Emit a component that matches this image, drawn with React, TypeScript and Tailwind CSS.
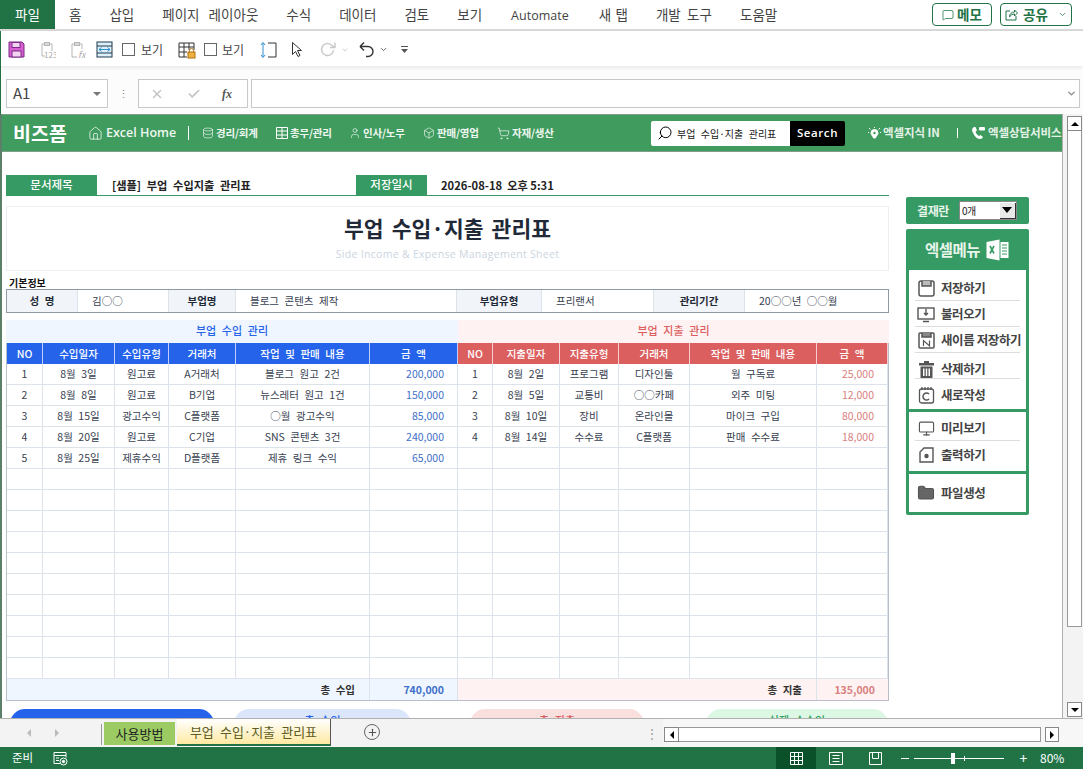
import { ChevronDown, House, Database, User, Box, ShoppingCart, Search, MessageSquare, X, Check, Plus, Monitor, Folder } from 'lucide-react';

const FONT = '[font-family:"Noto_Sans_CJK_KR","Noto_Sans",sans-serif]';

const TABS = [
  { label: '홈', cls: '' },
  { label: '삽입', cls: '' },
  { label: '페이지 레이아웃', cls: '[word-spacing:0.45em]' },
  { label: '수식', cls: '' },
  { label: '데이터', cls: '' },
  { label: '검토', cls: '' },
  { label: '보기', cls: '' },
  { label: 'Automate', cls: "[font-family:'Open_Sans',sans-serif] text-[12.500px] pt-[4px] pl-[15px] pr-[16px]" },
  { label: '새 탭', cls: '[word-spacing:0.1em]' },
  { label: '개발 도구', cls: '[word-spacing:0.25em]' },
  { label: '도움말', cls: '' },
];
const COLS = 'grid grid-cols-[36px_72px_54px_67px_134px_88px_35px_67px_59px_71px_127px_71px]';

const INCOME = [
  ['1', '8월 3일', '원고료', 'A거래처', '블로그 원고 2건', '200,000'],
  ['2', '8월 8일', '원고료', 'B기업', '뉴스레터 원고 1건', '150,000'],
  ['3', '8월 15일', '광고수익', 'C플랫폼', '○월 광고수익', '85,000'],
  ['4', '8월 20일', '원고료', 'C기업', 'SNS 콘텐츠 3건', '240,000'],
  ['5', '8월 25일', '제휴수익', 'D플랫폼', '제휴 링크 수익', '65,000'],
];
const EXPENSE = [
  ['1', '8월 2일', '프로그램', '디자인툴', '월 구독료', '25,000'],
  ['2', '8월 5일', '교통비', '○○카페', '외주 미팅', '12,000'],
  ['3', '8월 10일', '장비', '온라인몰', '마이크 구입', '80,000'],
  ['4', '8월 14일', '수수료', 'C플랫폼', '판매 수수료', '18,000'],
];

function Cell({ text = '' }: { text?: string }) {
  return (
    <div className="h-[21px] flex items-center justify-center border-r border-b border-[#dde3ea] text-[#374151]">
      {text}
    </div>
  );
}

function Amount({ text = '', color }: { text?: string; color: string }) {
  return (
    <div className={`h-[21px] flex items-center justify-end pr-[13px] border-r border-b border-[#dde3ea] ${color}`}>
      {text}
    </div>
  );
}

function Rows() {
  const rows = Array.from({ length: 15 }, (_, i) => i);
  return (
    <>
      {rows.map((i) => {
        const a = INCOME[i] || ['', '', '', '', '', ''];
        const b = EXPENSE[i] || ['', '', '', '', '', ''];
        return (
          <div key={i} className={COLS}>
            {a.slice(0, 5).map((t, j) => <Cell key={j} text={t} />)}
            <Amount text={a[5]} color="text-[#3f6fc9]" />
            {b.slice(0, 5).map((t, j) => <Cell key={j} text={t} />)}
            <Amount text={b[5]} color="text-[#d98080]" />
          </div>
        );
      })}
    </>
  );
}

function HeaderCell({ text, color }: { text: string; color: string }) {
  return <div className={`h-[21px] flex items-center justify-center border-r border-white/70 text-white font-medium ${color}`}>{text}</div>;
}

function InfoLabel({ text, w }: { text: string; w: string }) {
  return <div className={`${w} bg-[#f1f5f9] flex items-center justify-center font-bold text-[#1f2937] border-r border-[#dde3ea]`}>{text}</div>;
}

function InfoValue({ text, w }: { text: string; w: string }) {
  return <div className={`${w} pl-[14px] flex items-center text-[#374151] border-r border-[#dde3ea] last:border-r-0`}>{text}</div>;
}

function NavItem({ icon, text, w }: { icon: React.ReactNode; text: string; w: string }) {
  return (
    <div className={`${w} flex items-center gap-[2px] text-[10.5px] font-bold tracking-[-0.2px] text-[#eef7f0] shrink-0`}>
      {icon}
      <span>{text}</span>
    </div>
  );
}

function MenuRow({ icon, text, line = true, pt = 'pt-[2px]' }: { icon: React.ReactNode; text: string; line?: boolean; pt?: string }) {
  return (
    <div className={`h-[26px] mx-[6px] flex items-center gap-[6px] pl-[2px] ${pt} ${line ? 'border-b border-[#ddd]' : ''} text-[12.5px] font-semibold text-[#444] tracking-[-0.4px] [word-spacing:0] whitespace-nowrap`}>
      <span className="w-[18px] flex justify-center shrink-0">{icon}</span>
      <span>{text}</span>
    </div>
  );
}

function Toolbar() {
  return (
    <div className="h-[35px] flex items-center pl-[7px] pt-[2px] border-l border-[#217346] bg-white text-[12px] text-[#444] shadow-[0_2px_4px_rgba(0,0,0,0.08)] relative">
      <svg width="17" height="17" viewBox="0 0 17 17">
        <path d="M1 1h13l2 2v13H1z" fill="#d65fd0" stroke="#7a2a88" />
        <rect x="4" y="1.500" width="8" height="5" fill="#f3d3f0" stroke="#7a2a88" />
        <rect x="4" y="10" width="9" height="6" fill="#f3d3f0" stroke="#7a2a88" />
      </svg>
      <svg className="ml-[14px]" width="17" height="18" viewBox="0 0 17 18" fill="none" stroke="#b5b5b5">
        <path d="M3 3h10v7M3 3v12h3" />
        <rect x="5.500" y="1.500" width="5" height="3" />
        <text x="5" y="17" fontSize="8" fill="#aaa" stroke="none">123</text>
      </svg>
      <svg className="ml-[13px]" width="17" height="18" viewBox="0 0 17 18" fill="none" stroke="#b5b5b5">
        <path d="M3 3h10v5M3 3v13h5" />
        <rect x="5.500" y="1.500" width="5" height="3" />
        <text x="9" y="17" fontSize="9" fontStyle="italic" fill="#aaa" stroke="none">fx</text>
      </svg>
      <svg className="ml-[10px]" width="17" height="17" viewBox="0 0 17 17" fill="none" stroke="#1e3a4c">
        <rect x="1" y="1" width="15" height="15" fill="#dff0fa" />
        <path d="M1 5h15M1 12h15" />
        <path d="M3 8.500h11M3 8.500l2.500-2M3 8.500l2.500 2M14 8.500l-2.500-2M14 8.500l-2.500 2" stroke="#2f8fd0" />
      </svg>
      <span className="ml-[9px] w-[13px] h-[13px] border border-[#666] bg-white" />
      <span className="ml-[6px] w-[24px]">보기</span>
      <svg className="ml-[13px]" width="18" height="18" viewBox="0 0 18 18" fill="none" stroke="#333">
        <path d="M1 2h15v7M1 2v14h8M1 6h15M1 11h8M6 2v14M11 2v7" />
        <rect x="10" y="11" width="7" height="6" fill="#f0b040" stroke="#b07010" />
        <path d="M11.500 11V9.500a2 2 0 0 1 4 0V11" stroke="#b07010" />
      </svg>
      <span className="ml-[8px] w-[13px] h-[13px] border border-[#666] bg-white" />
      <span className="ml-[5px] w-[24px]">보기</span>
      <svg className="ml-[14px]" width="17" height="18" viewBox="0 0 17 18" fill="none">
        <path d="M8 2h8v14H8" stroke="#333" />
        <path d="M3 2v14M1 4l2-2.500L5 4M1 14l2 2.500L5 14" stroke="#2f8fd0" />
      </svg>
      <svg className="ml-[14px]" width="13" height="17" viewBox="0 0 13 17" fill="#fff" stroke="#333">
        <path d="M1.500 1.500v12l3-3 2.500 5 2-1-2.500-5h4z" />
      </svg>
      <svg className="ml-[15px]" width="20" height="17" viewBox="0 0 19 17" fill="none" stroke="#c8c8c8" strokeWidth="1.400">
        <path d="M14 9a6 6 0 1 1-2-5l3 2.500M15.500 1.500v5h-5" />
      </svg>
      <ChevronDown className="ml-[2px] text-[#bbb]" size={8} />
      <svg className="ml-[9px]" width="18" height="18" viewBox="0 0 18 18" fill="none" stroke="#333" strokeWidth="1.400">
        <path d="M2 5.500h8a5 5 0 0 1 0 10H8M2 5.500l4-4M2 5.500l4 4" />
      </svg>
      <ChevronDown className="ml-[3px] text-[#444]" size={9} />
      <svg className="ml-[12px]" width="9" height="9" viewBox="0 0 9 9" fill="#555">
        <rect x="1" y="1" width="7" height="1" />
        <path d="M1 4h7L4.500 8z" />
      </svg>
    </div>
  );
}

function FormulaBar() {
  return (
    <div className="h-[48px] border-l border-[#217346] bg-[#fcfcfc] flex items-start pt-[13px] pl-[5px] pr-[3px]">
      <div className="w-[102px] h-[29px] border border-[#c8c8c8] bg-white flex items-center justify-between px-[6px] text-[15px] text-[#444]">
        <span>A1</span>
        <span className="w-0 h-0 border-x-[4px] border-x-transparent border-t-[4px] border-t-[#777]" />
      </div>
      <div className="w-[30px] h-[29px] flex items-center justify-center text-[#888] text-[11px]">⋮</div>
      <div className="w-[110px] h-[29px] border border-[#c8c8c8] bg-white flex items-center pl-[11px] text-[#c4c4c4]">
        <X size={14} strokeWidth={2.500} />
        <Check className="ml-[23px]" size={14} strokeWidth={3} />
        <span className="ml-[21px] text-[12px] italic font-bold text-[#555] [font-family:'Liberation_Serif',serif]">fx</span>
      </div>
      <div className="ml-[3px] flex-1 h-[29px] border border-[#c8c8c8] bg-white flex items-center justify-end pr-[2px]">
        <ChevronDown className="text-[#888]" size={11} strokeWidth={3} />
      </div>
    </div>
  );
}

function Banner() {
  return (
    <div className="h-[38px] bg-[#409b5e] border-y border-[#7f9f8c] flex items-center pl-[11px] whitespace-nowrap overflow-hidden">
      <span className="w-[75px] text-[19.5px] font-bold text-white">비즈폼</span>
      <House className="text-white" size={15} strokeWidth={1.200} />
      <span className="ml-[3px] w-[82px] text-[12.500px] font-semibold text-[#eef7f0] [word-spacing:0] [font-family:'Open_Sans',sans-serif]">Excel Home</span>
      <span className="w-[1px] h-[14px] bg-white" />
      <div className="w-[13px]" />
      <NavItem w="w-[74px]" icon={<Database className="text-white" size={12} strokeWidth={1.200} />} text="경리/회계" />
      <NavItem
        w="w-[73px]"
        icon={
          <svg width="12" height="12" viewBox="0 0 12 12" fill="none" stroke="#fff">
            <path d="M.5.500h11v11H.5zM6 .5v11M.5 4h11M.5 8h11" />
          </svg>
        }
        text="총무/관리"
      />
      <NavItem w="w-[74px]" icon={<User className="text-white" size={12} strokeWidth={1.200} />} text="인사/노무" />
      <NavItem w="w-[74px]" icon={<Box className="text-white" size={12} strokeWidth={1.200} />} text="판매/영업" />
      <NavItem w="w-[154px]" icon={<ShoppingCart className="text-white" size={13} strokeWidth={1.200} />} text="자재/생산" />
      <div className="w-[139px] h-[25px] bg-white rounded-l-[2px] flex items-center pl-[6px] gap-[4px] text-[10px] text-[#222]">
        <Search className="text-black -scale-x-100" size={16} strokeWidth={1.500} />
        <span>부업 수입·지출 관리표</span>
      </div>
      <div className="w-[55px] h-[25px] bg-black rounded-r-[2px] flex items-center justify-center text-[11.500px] font-semibold tracking-[0.6px] text-white [font-family:'Open_Sans',sans-serif]">Search</div>
      <svg className="ml-[23px]" width="13" height="13" viewBox="0 0 13 13" fill="none" stroke="#fff">
        <path d="M1 1l1.500 1.500M12 1l-1.500 1.500M6.500 0v1M0 5.500h1M12 5.500h1" />
        <path d="M6.500 2.500a3.500 3.500 0 0 1 3.500 3.500c0 2-2 3-2.500 5h-2C5 9 3 8 3 6a3.500 3.500 0 0 1 3.500-3.500z" fill="#fff" />
        <circle cx="6.500" cy="6" r="1.200" fill="#409b5e" stroke="none" />
      </svg>
      <span className="ml-[2px] w-[74px] text-[11.500px] font-bold text-[#e4f2e8] tracking-[-0.1px] [word-spacing:0]">엑셀지식 IN</span>
      <span className="w-[1px] h-[10px] bg-white" />
      <svg className="ml-[13px]" width="15" height="14" viewBox="0 0 15 14">
        <path d="M3 1c-2 1-2.500 3-1 6s4 6 7 6c1.500 0 2.500-1 3-2l-2.500-2-1.500 1C6.500 9.500 5 7.500 4.500 5.500L6 4.500 4.500 1z" fill="#fff" />
        <rect x="8" y="1" width="6" height="3.500" rx="1" fill="#fff" />
      </svg>
      <span className="ml-[2px] text-[11.500px] font-bold text-[#e4f2e8] tracking-[-0.1px]">엑셀상담서비스</span>
    </div>
  );
}

function Main() {
  return (
    <div className="w-[883px] ml-[4px] shrink-0 text-[10.500px]">
      <div className="mt-[23px] h-[21px] flex items-stretch border-b border-[#359a63]">
        <div className="w-[91px] bg-[#359a63] text-white text-[11.500px] flex items-center justify-center font-medium">문서제목</div>
        <div className="w-[259px] pl-[15px] flex items-center text-[11.200px] font-bold text-[#222]">[샘플] 부업 수입지출 관리표</div>
        <div className="w-[71px] bg-[#359a63] text-white text-[11.500px] flex items-center justify-center font-medium">저장일시</div>
        <div className="pl-[14px] flex items-center text-[11.200px] font-bold text-[#222] [word-spacing:0]">2026-08-18 &nbsp;오후 5:31</div>
      </div>
      <div className="mt-[10px] h-[65px] border border-[#eeeeee] flex flex-col items-center pt-[6px]">
        <div className="text-[21.500px] font-bold text-[#1f2937] leading-[30px]">부업 수입·지출 관리표</div>
        <div className="mt-[4px] text-[10.500px] text-[#cbd5e1] tracking-[0.3px] leading-[14px] [word-spacing:0] [font-family:'Open_Sans',sans-serif]">Side Income &amp; Expense Management Sheet</div>
      </div>
      <div className="mt-[4px] h-[14px] pl-[3px] flex items-center text-[10px] font-bold text-[#111]">기본정보</div>
      <div className="h-[24px] flex border border-[#8d99a5]">
        <InfoLabel w="w-[71px]" text="성 명" />
        <InfoValue w="w-[91px]" text="김○○" />
        <InfoLabel w="w-[67px]" text="부업명" />
        <InfoValue w="w-[221px]" text="블로그 콘텐츠 제작" />
        <InfoLabel w="w-[85px]" text="부업유형" />
        <InfoValue w="w-[112px]" text="프리랜서" />
        <InfoLabel w="w-[91px]" text="관리기간" />
        <InfoValue w="w-[143px]" text="20○○년 ○○월" />
      </div>
      <div className="mt-[7px] flex h-[23px] text-[11px] font-medium">
        <div className="w-[452px] bg-[#eff6ff] text-[#2563eb] flex items-center justify-center pb-[2px]">부업 수입 관리</div>
        <div className="w-[431px] bg-[#fef2f2] text-[#dc5f5f] flex items-center justify-center pb-[2px]">부업 지출 관리</div>
      </div>
      <div className="border-x border-b border-[#b8bfc6]">
        <div className={COLS}>
          {['NO', '수입일자', '수입유형', '거래처', '작업 및 판매 내용', '금 액'].map((t) => <HeaderCell key={t} text={t} color="bg-[#2563eb]" />)}
          {['NO', '지출일자', '지출유형', '거래처', '작업 및 판매 내용', '금 액'].map((t) => <HeaderCell key={t} text={t} color="bg-[#dc5f5f]" />)}
        </div>
        <Rows />
        <div className="flex h-[21px] font-bold text-[#333]">
          <div className="w-[363px] bg-[#eff6ff] flex items-center justify-end pr-[14px] border-r border-[#dde3ea]">총 수입</div>
          <div className="w-[88px] bg-[#eff6ff] flex items-center justify-end pr-[13px] text-[#3f6fc9] border-r border-[#dde3ea]">740,000</div>
          <div className="w-[359px] bg-[#fef2f2] flex items-center justify-end pr-[14px] border-r border-[#dde3ea]">총 지출</div>
          <div className="w-[71px] bg-[#fef2f2] flex items-center justify-end pr-[13px] text-[#d98080]">135,000</div>
        </div>
      </div>
      <div className="mt-[8px] flex text-[11px] font-medium">
        <div className="ml-[4px] w-[204px] h-[30px] rounded-t-[15px] bg-[#2563eb]" />
        <div className="ml-[20px] w-[177px] h-[30px] rounded-t-[15px] bg-[#dbe6fb] text-[#2563eb] text-center pt-[3px]">총 수입</div>
        <div className="ml-[59px] w-[174px] h-[30px] rounded-t-[15px] bg-[#fadfdf] text-[#dc5f5f] text-center pt-[3px]">총 지출</div>
        <div className="ml-[62px] w-[182px] h-[30px] rounded-t-[15px] bg-[#dcf8e5] text-[#2f9e5f] text-center pt-[3px]">실제 순수입</div>
      </div>
    </div>
  );
}

function Side() {
  const gray = '#555';
  return (
    <div className="ml-[17px] mt-[45px] w-[123px] shrink-0">
      <div className="h-[27px] rounded-[2px] bg-[#359a63] flex items-center pl-[11px] text-[12px] font-bold text-[#e6f4ea] tracking-[-0.4px]">
        <span>결재란</span>
        <div className="ml-[10px] w-[58px] h-[19px] bg-white border border-[#888] flex items-center pl-[2px] text-[10px] text-[#222] font-normal justify-between">
          <span>0개</span>
          <span className="w-[16px] h-[16px] bg-[#e8e8e8] border-r border-b border-[#333] flex items-center justify-center">
            <span className="w-0 h-0 border-x-[5px] border-x-transparent border-t-[6px] border-t-black" />
          </span>
        </div>
      </div>
      <div className="mt-[5px] h-[286px] rounded-[2px] bg-[#359a63] flex flex-col">
        <div className="h-[41px] flex items-center justify-center gap-[5px] text-[15.500px] font-bold text-[#e6f4ea] tracking-[-0.5px]">
          <span>엑셀메뉴</span>
          <svg width="25" height="22" viewBox="0 0 24 22">
            <path d="M1 3l13-2.500v21L1 19z" fill="#fff" />
            <rect x="15" y="3" width="8" height="16" fill="#fff" />
            <path d="M16.500 6h5M16.500 9h5M16.500 12h5M16.500 15h5" stroke="#359a63" />
            <path d="M4.500 7l4 7.500M8.500 7l-4 7.500" stroke="#359a63" strokeWidth="1.600" />
          </svg>
        </div>
        <div className="mx-[3px] h-[139px] bg-white pt-[5px]">
          <MenuRow text="저장하기" icon={<svg width="17" height="17" viewBox="0 0 17 17" fill="none" stroke={gray} strokeWidth="1.500"><rect x="1" y="1" width="15" height="15" rx="2" /><path d="M4 1v5h9V1" fill="#bbb" /></svg>} />
          <MenuRow text="불러오기" icon={<svg width="18" height="17" viewBox="0 0 18 17" fill="none" stroke={gray} strokeWidth="1.400"><rect x="1" y="2" width="16" height="11" /><path d="M9 3v6M7 7l2 2 2-2M6 15.500h6" /></svg>} />
          <MenuRow text="새이름 저장하기" icon={<svg width="17" height="17" viewBox="0 0 17 17" fill="none" stroke={gray} strokeWidth="1.500"><rect x="1" y="1" width="15" height="15" rx="1" /><path d="M4 1v4h9V1" fill="#888" /><path d="M5.500 14V8.500l6 5.500V8.500" strokeWidth="1.200" /></svg>} />
          <MenuRow text="삭제하기" pt="pt-[8px]" icon={<svg width="15" height="17" viewBox="0 0 15 17" fill={gray}><rect x="5" y="0" width="5" height="2" /><rect x="0" y="2" width="15" height="2.500" /><path d="M1.500 5.500h12V17h-12zM4 7.500v7.500h1.500V7.500zM6.750 7.500v7.500h1.500V7.500zM9.500 7.500v7.500H11V7.500z" fillRule="evenodd" /></svg>} />
          <MenuRow text="새로작성" pt="pt-[6px]" line={false} icon={<svg width="17" height="18" viewBox="0 0 17 18" fill="none" stroke={gray} strokeWidth="1.300"><rect x="1.500" y="3" width="14" height="14" rx="2" /><path d="M4 1v3M7 1v3M10 1v3M13 1v3" /><path d="M11 8a3.500 3.500 0 1 0 0 5" strokeWidth="1.600" /></svg>} />
        </div>
        <div className="mt-[3px] mx-[3px] h-[59px] bg-white pt-[3px]">
          <MenuRow text="미리보기" icon={<Monitor size={17} color={gray} strokeWidth={1.600} />} />
          <MenuRow text="출력하기" line={false} icon={<svg width="15" height="16" viewBox="0 0 15 16" fill="none" stroke={gray} strokeWidth="1.400"><path d="M5 1h9v14H1V5z" /><circle cx="7.500" cy="9" r="1.500" fill={gray} /></svg>} />
        </div>
        <div className="mt-[3px] mx-[3px] h-[38px] bg-white flex items-center">
          <div className="w-full -mt-[2px]">
            <MenuRow text="파일생성" line={false} icon={<Folder size={18} color={gray} fill="#666" strokeWidth={1.500} />} />
          </div>
        </div>
      </div>
    </div>
  );
}

function VScroll() {
  return (
    <div className="w-[20px] bg-[#f3f3f3] shrink-0 pl-[4px] pr-[1px] pt-[2px] pb-[1px] flex flex-col">
      <div className="h-[15px] border border-[#888] bg-white flex items-center justify-center">
        <span className="w-0 h-0 border-x-[4px] border-x-transparent border-b-[4px] border-b-black" />
      </div>
      <div className="h-[496px] border-x border-b border-[#999] bg-white" />
      <div className="flex-1" />
      <div className="h-[15px] border border-[#888] bg-white flex items-center justify-center">
        <span className="w-0 h-0 border-x-[4px] border-x-transparent border-t-[4px] border-t-black" />
      </div>
    </div>
  );
}

function SheetTabs() {
  return (
    <div className="h-[29px] bg-[#f3f3f3] flex text-[13px] border-t border-[#b0b0b0] relative">
      <div className="w-[101px] flex items-center pl-[27px] gap-[24px] text-[#bbb]">
        <span className="w-0 h-0 border-y-[4px] border-y-transparent border-r-[4px] border-r-[#bbb]" />
        <span className="w-0 h-0 border-y-[4px] border-y-transparent border-l-[4px] border-l-[#bbb]" />
      </div>
      <div className="w-[1px] h-[21px] mt-[5px] bg-[#999]" />
      <div className="ml-[2px] mt-[3px] w-[71px] h-[23px] bg-[#9ccb63] flex items-center justify-center text-[#222]">사용방법</div>
      <div className="ml-[2px] w-[154px] h-[27px] border-r border-b-2 border-r-[#555] border-b-[#217346] bg-gradient-to-b from-white to-[#ffe9a0] flex items-center justify-center text-[#5c5c1f]">부업 수입·지출 관리표</div>
      <div className="ml-[33px] mt-[5px] w-[16px] h-[16px] rounded-full border border-[#666] flex items-center justify-center text-[#555]">
        <Plus size={11} strokeWidth={2.500} />
      </div>
      <div className="ml-[266px] w-[17px] flex items-center text-[#999] text-[12px]">⋮</div>
      <div className="flex-1 flex items-start pt-[8px] bg-[#f7f7f7] pl-[1px] pr-[24px]">
        <div className="w-[15px] h-[15px] border border-[#888] bg-white flex items-center justify-center">
          <span className="w-0 h-0 border-y-[4px] border-y-transparent border-r-[4px] border-r-black" />
        </div>
        <div className="flex-1 h-[15px] border border-[#999] border-l-0 bg-white" />
        <div className="ml-[4px] w-[14px] h-[15px] border border-[#888] bg-white flex items-center justify-center">
          <span className="w-0 h-0 border-y-[4px] border-y-transparent border-l-[4px] border-l-black" />
        </div>
      </div>
    </div>
  );
}

function StatusBar() {
  return (
    <div className="h-[22px] bg-[#217346] flex items-center text-white text-[11.500px]">
      <span className="ml-[12px]">준비</span>
      <svg className="ml-[20px]" width="15" height="15" viewBox="0 0 15 15" fill="none" stroke="#fff">
        <path d="M1 1.500h12M1 4.500h12M1 1.500v11h6M13 1.500v5M3 7h3M3 9.500h3" />
        <circle cx="10.500" cy="10.500" r="3.500" />
        <circle cx="10.500" cy="10.500" r="1.200" fill="#fff" />
      </svg>
      <div className="flex-1" />
      <div className="w-[40px] h-[22px] bg-[#0a5028] flex items-center justify-center">
        <svg width="13" height="13" viewBox="0 0 13 13" fill="none" stroke="#fff"><path d="M.5.500h12v12H.5zM4.500.500v12M8.500.500v12M.5 4.500h12M.5 8.500h12" /></svg>
      </div>
      <svg className="ml-[13px]" width="14" height="13" viewBox="0 0 14 13" fill="none" stroke="#fff"><path d="M.5.500h13v12H.5zM3.500 3.500h7M3.500 6.500h7M3.500 9.500h7" /></svg>
      <svg className="ml-[26px]" width="13" height="13" viewBox="0 0 13 13" fill="none" stroke="#fff"><path d="M.5.500h12v12H.5zM3.500.500v6h6v-6" /></svg>
      <span className="ml-[19px] w-[8px] h-[1px] bg-white" />
      <div className="ml-[5px] w-[90px] h-[1px] bg-white relative">
        <span className="absolute left-[37px] -top-[5px] w-[4px] h-[11px] bg-white" />
        <span className="absolute left-[50px] -top-[2px] w-[1px] h-[5px] bg-white" />
      </div>
      <span className="ml-[14px] w-[11px] text-center text-[14px] leading-none">+</span>
      <span className="ml-[11px] w-[24px] mr-[19px] text-[12px]">80%</span>
    </div>
  );
}

export default function App() {
  return (
    <div className={`w-[1083px] h-[769px] overflow-hidden flex flex-col bg-white [word-spacing:0.2em] ${FONT}`}>
      {/* Ribbon tabs */}
      <div className="h-[31px] shrink-0 flex items-stretch border-b-2 border-[#d8d8d8] text-[13.500px] text-[#444] bg-white">
        <div className="w-[55px] bg-[#217346] text-white flex items-center justify-center">파일</div>
        {TABS.map((t) => (
          <div key={t.label} className={`px-[14px] flex items-center ${t.cls}`}>{t.label}</div>
        ))}
        <div className="flex-1" />
        <div className="my-[3px] w-[60px] rounded-[4px] border border-[#217346] flex items-center justify-center gap-[3px] font-bold text-[13.500px] text-[#217346]">
          <MessageSquare size={12} strokeWidth={1.500} />
          <span>메모</span>
        </div>
        <div className="ml-[8px] mr-[11px] my-[3px] w-[72px] rounded-[4px] border border-[#217346] flex items-center justify-center gap-[5px] font-bold text-[13.500px] text-[#217346]">
          <svg width="13" height="13" viewBox="0 0 13 13" fill="none" stroke="#217346">
            <path d="M5 3H1v9h10V8" />
            <path d="M4.500 9c0-3 2-5 5-5V2l3 3-3 3V6c-2 0-4 1-5 3z" />
          </svg>
          <span>공유</span>
          <ChevronDown className="ml-[5px]" size={9} />
        </div>
      </div>
      <Toolbar />
      <FormulaBar />
      {/* Sheet area */}
      <div className="h-[604px] flex border-l-2 border-[#5c7f6a] overflow-hidden">
        <div className="flex-1 min-w-0 border-r border-[#b0b0b0] overflow-hidden">
          <Banner />
          <div className="flex">
            <Main />
            <Side />
          </div>
        </div>
        <VScroll />
      </div>
      <SheetTabs />
      <StatusBar />
    </div>
  );
}
